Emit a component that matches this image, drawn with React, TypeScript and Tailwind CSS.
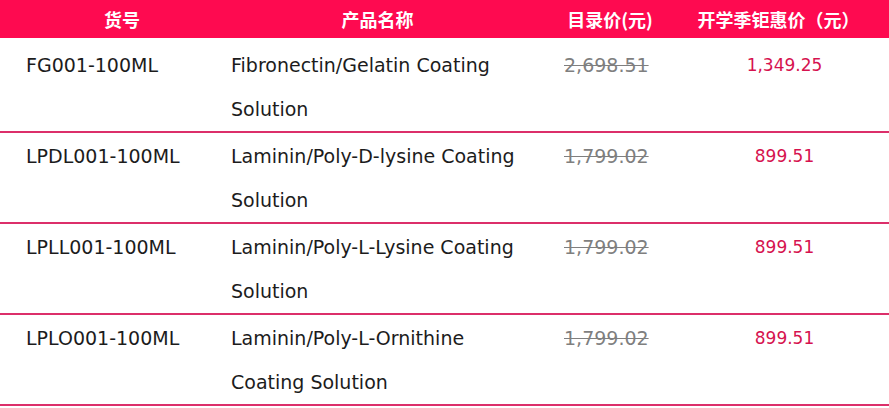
const rows = [
  { sku: 'FG001-100ML', name: 'Fibronectin/Gelatin Coating Solution', list: '2,698.51', sale: '1,349.25' },
  { sku: 'LPDL001-100ML', name: 'Laminin/Poly-D-lysine Coating Solution', list: '1,799.02', sale: '899.51' },
  { sku: 'LPLL001-100ML', name: 'Laminin/Poly-L-Lysine Coating Solution', list: '1,799.02', sale: '899.51' },
  { sku: 'LPLO001-100ML', name: 'Laminin/Poly-L-Ornithine Coating Solution', list: '1,799.02', sale: '899.51' },
];

const cjk = "font-['Noto_Sans_CJK_SC',sans-serif]";

export default function App() {
  return (
    <div className="w-[889px] h-[408px] overflow-hidden bg-white">
      {/* header */}
      <div className={`flex h-[38px] items-center bg-[#fe0a50] text-[18px] font-bold leading-none text-white ${cjk}`}>
        <div className="w-[215px] pl-[29px] text-center">货号</div>
        <div className="w-[325px] text-center">产品名称</div>
        <div className="w-[140px] text-center">目录价(元)</div>
        <div className="flex-1 pr-[12px] text-center">开学季钜惠价（元）</div>
      </div>

      <div className="pt-[4px] font-['DejaVu_Sans',sans-serif] text-[19px] leading-[44px]">
        {rows.map((r) => (
          <div key={r.sku} className="flex border-b-2 border-[#dc2f6a] pt-[1px]">
            <div className="w-[215px] pl-[26px] text-[#1c1c1c]">{r.sku}</div>
            <div className="w-[325px] pl-[16px] pr-[8px] text-[#1c1c1c]">{r.name}</div>
            <div className="w-[140px] pl-[24px] text-[#7f7f7f] line-through">{r.list}</div>
            <div className="flex-1 text-center text-[17px] text-[#d6124f]">{r.sale}</div>
          </div>
        ))}
      </div>
    </div>
  );
}
